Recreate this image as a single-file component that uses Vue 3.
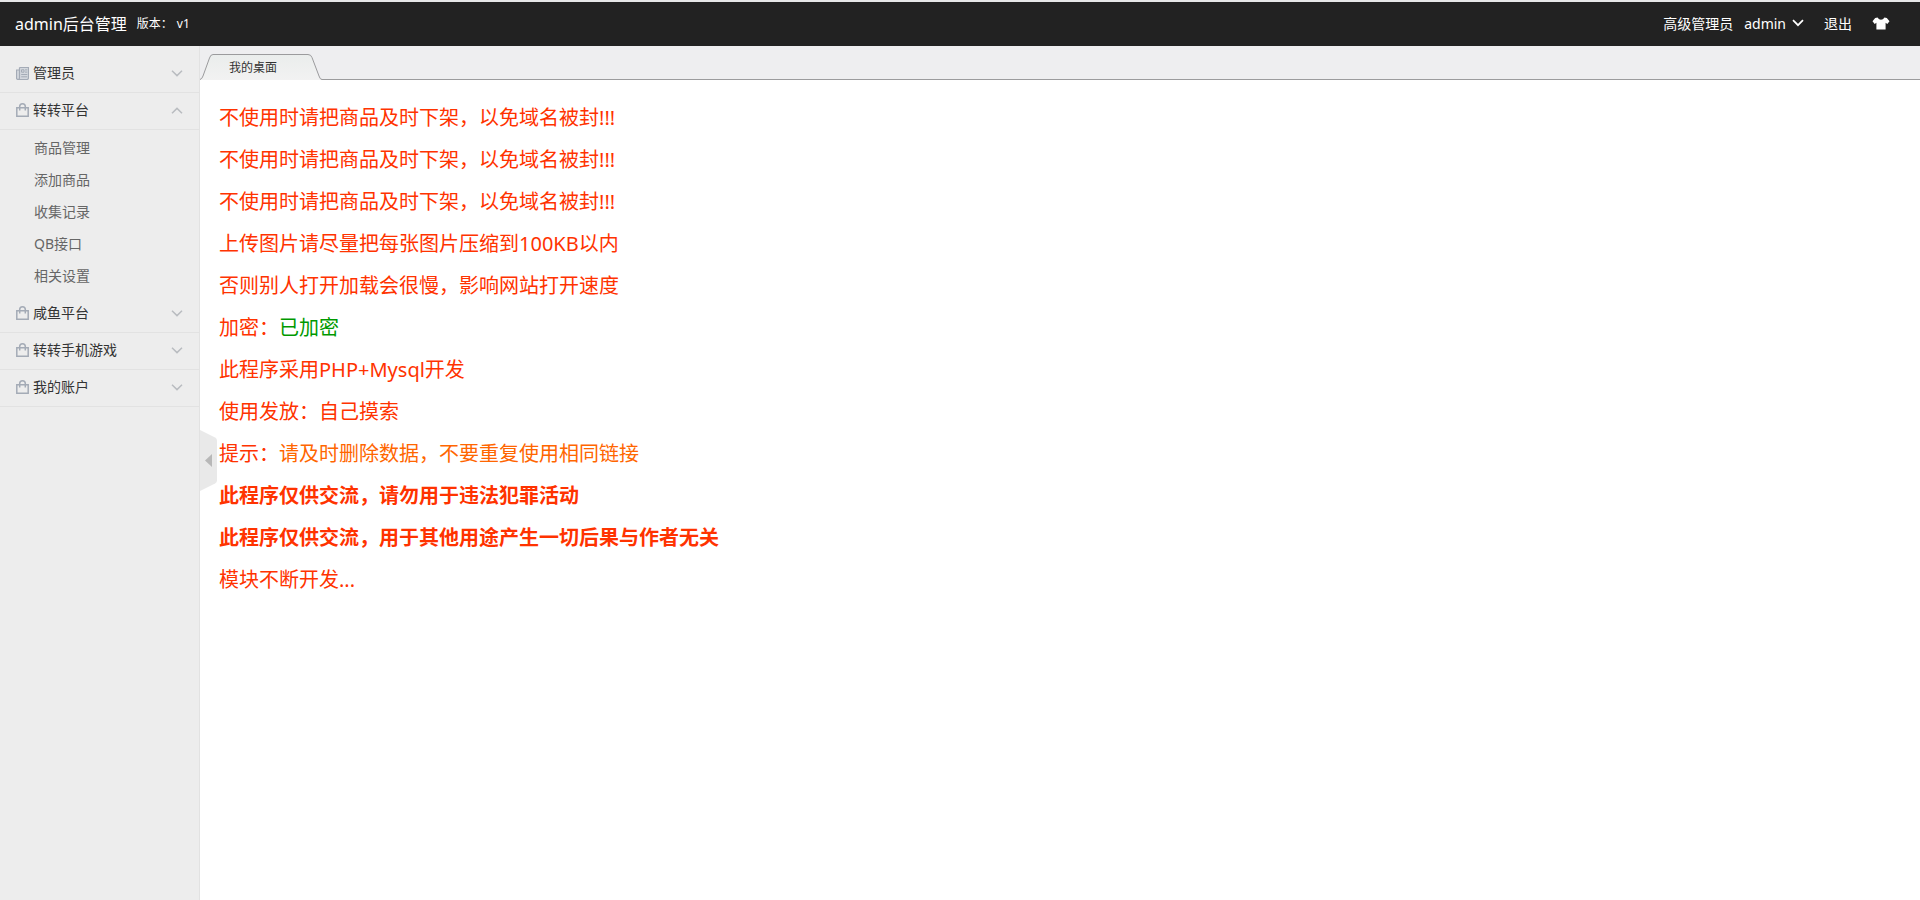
<script setup>
import { ref } from 'vue'

const menus = ref([
  { title: '管理员', icon: 'news', open: false, items: [] },
  {
    title: '转转平台',
    icon: 'bag',
    open: true,
    items: ['商品管理', '添加商品', '收集记录', 'QB接口', '相关设置'],
  },
  { title: '咸鱼平台', icon: 'bag', open: false, items: [] },
  { title: '转转手机游戏', icon: 'bag', open: false, items: [] },
  { title: '我的账户', icon: 'bag', open: false, items: [] },
])

const notices = [
  { text: '不使用时请把商品及时下架，以免域名被封!!!' },
  { text: '不使用时请把商品及时下架，以免域名被封!!!' },
  { text: '不使用时请把商品及时下架，以免域名被封!!!' },
  { text: '上传图片请尽量把每张图片压缩到100KB以内' },
  { text: '否则别人打开加载会很慢，影响网站打开速度' },
  { text: '加密：', value: '已加密', tone: 'green' },
  { text: '此程序采用PHP+Mysql开发' },
  { text: '使用发放：自己摸索' },
  { text: '提示：', value: '请及时删除数据，不要重复使用相同链接', tone: 'orange' },
  { text: '此程序仅供交流，请勿用于违法犯罪活动', strong: true },
  { text: '此程序仅供交流，用于其他用途产生一切后果与作者无关', strong: true },
  { text: '模块不断开发...' },
]

const collapsed = ref(false)
</script>

<template>
  <div class="page">
    <header class="topbar">
      <div class="brand">
        <a class="logo" href="#">admin后台管理</a>
        <span class="version">版本：</span>
        <span class="version">v1</span>
      </div>
      <nav class="user">
        <span class="role">高级管理员</span>
        <button class="account" type="button">
          admin
          <svg width="12" height="8" viewBox="0 0 12 8" aria-hidden="true">
            <path d="M1 1.2 6 6.2 11 1.2" fill="none" stroke="#fff" stroke-width="1.7" />
          </svg>
        </button>
        <a class="exit" href="#">退出</a>
        <button class="skin" type="button" aria-label="换肤">
          <svg width="18" height="13" viewBox="0 0 18 13" aria-hidden="true">
            <path
              d="M5.6.6C6.6 2.2 7.7 2.7 9 2.7S11.4 2.2 12.4.6L14.8 1 17.5 4.2 15.3 6.9 13.6 5.8V12.5H4.4V5.8L2.7 6.9.5 4.2 3.2 1Z"
              fill="#fff"
            />
          </svg>
        </button>
      </nav>
    </header>

    <div class="body">
      <aside v-show="!collapsed" class="side">
        <section v-for="menu in menus" :key="menu.title">
          <button
            class="menu-title"
            type="button"
            :aria-expanded="menu.open"
            @click="menu.open = !menu.open"
          >
            <svg v-if="menu.icon === 'news'" class="icon" width="13" height="13" viewBox="0 0 13 13" aria-hidden="true">
              <path
                d="M3.5.5h9v10.2q0 1.8-1.8 1.8H2.3Q.5 12.5.5 10.7V3h3M3.5.5v10.4q0 1.2-1 1.5"
                fill="#d4d8de"
                stroke="#a4abb6"
                stroke-width="1.2"
              />
              <path d="M5.5 2.8H8v2.4H5.5zM9 2.9h2.3M9 5.1h2.3M5.2 7.5h6.1M5.2 9.8h6.1" fill="none" stroke="#a4abb6" />
            </svg>
            <svg v-else class="icon" width="13" height="14" viewBox="0 0 13 14" aria-hidden="true">
              <path
                d="M.8 4.8h11.4v8.4H.8zM3.7 7.5V3.6Q3.7.8 6.5.8T9.3 3.6v3.9"
                fill="none"
                stroke="#a4abb6"
                stroke-width="1.5"
              />
            </svg>
            <span class="label">{{ menu.title }}</span>
            <svg
              class="arrow"
              :class="{ up: menu.open }"
              width="12"
              height="7"
              viewBox="0 0 12 7"
              aria-hidden="true"
            >
              <path d="M1 .8 6 5.6 11 .8" fill="none" stroke="#b9bcc0" stroke-width="1.5" />
            </svg>
          </button>
          <ul v-if="menu.open && menu.items.length" class="submenu">
            <li v-for="item in menu.items" :key="item"><a href="#">{{ item }}</a></li>
          </ul>
        </section>
      </aside>

      <main class="main">
        <div class="tabs">
          <a class="tab" href="#">
            <svg class="tab-shape" width="122" height="26" viewBox="0 0 122 26" aria-hidden="true">
              <defs>
                <linearGradient id="tabFill" x1="0" y1="0" x2="0" y2="1">
                  <stop offset="0" stop-color="#eaedec" />
                  <stop offset="1" stop-color="#f2f2f2" />
                </linearGradient>
              </defs>
              <path
                d="M0 26V25.5Q2 25 3 22L9.5 4Q10.5.5 13 .5H108Q111 .5 112 3.5L119 22Q120 25.5 122 25.5V26Z"
                fill="url(#tabFill)"
              />
              <path
                d="M0 25.5Q2 25 3 22L9.5 4Q10.5.5 13 .5H108Q111 .5 112 3.5L119 22Q120 25.5 122 25.5"
                fill="none"
                stroke="#9b9b9d"
              />
            </svg>
            <span class="tab-label">我的桌面</span>
          </a>
        </div>

        <article class="content">
          <p v-for="(line, i) in notices" :key="i" :class="{ strong: line.strong }">
            {{ line.text }}<span v-if="line.value" :class="line.tone">{{ line.value }}</span>
          </p>
        </article>

        <button class="toggle" type="button" aria-label="收起菜单" @click="collapsed = !collapsed">
          <svg width="17" height="61" viewBox="0 0 17 61" aria-hidden="true">
            <path d="M0 0 15 7.5Q17 8.5 17 10.5V50.5Q17 52.5 15 53.5L0 61Z" fill="#e9e9e9" />
            <path d="M12 24V37L5 30.5Z" fill="#b8b8b8" />
          </svg>
        </button>
      </main>
    </div>
  </div>
</template>

<style>
body {
  margin: 0;
}
</style>

<style scoped>
.page {
  box-sizing: border-box;
  display: flex;
  flex-direction: column;
  min-height: 100vh;
  border-top: 2px solid #e6e7e8;
  background: #fff;
  color: #333;
  font-family: "Noto Sans", "Noto Sans CJK SC", sans-serif;
  font-size: 14px;
}

a {
  color: inherit;
  text-decoration: none;
}

button {
  margin: 0;
  padding: 0;
  border: 0;
  background: none;
  color: inherit;
  font: inherit;
  cursor: pointer;
}

.topbar {
  box-sizing: border-box;
  display: flex;
  justify-content: space-between;
  align-items: center;
  height: 44px;
  padding: 0 30px 2px 15px;
  background: #222;
  color: #fff;
}

.brand,
.user {
  display: flex;
  align-items: center;
}

.logo {
  margin-right: 10px;
  font-size: 16px;
}

.version {
  margin-right: 4px;
  font-size: 12px;
}

.account {
  display: flex;
  align-items: center;
  gap: 6px;
  margin-left: 11px;
}

.exit {
  margin-left: 20px;
}

.skin {
  display: flex;
  margin-left: 20px;
}

.body {
  display: flex;
  flex: 1;
}

.side {
  box-sizing: border-box;
  flex: 0 0 200px;
  padding-top: 10px;
  border-right: 1px solid #e2e2e2;
  background: #ededed;
}

.menu-title {
  display: flex;
  align-items: center;
  width: 100%;
  height: 37px;
  padding: 0 16px 2px 16px;
  border-bottom: 1px solid #e2e2e2;
  line-height: 20px;
  text-align: left;
}

.label {
  flex: 1;
  margin-left: 4px;
}

.arrow.up {
  transform: rotate(180deg);
}

.submenu {
  margin: 0;
  padding: 2px 0 4px 34px;
  list-style: none;
  color: #666;
  line-height: 32px;
}

.submenu a {
  display: block;
}

.main {
  position: relative;
  flex: 1;
  min-width: 0;
}

.tabs {
  box-sizing: border-box;
  display: flex;
  height: 34px;
  padding-top: 8px;
  background: linear-gradient(#9b9b9d, #9b9b9d) bottom / 100% 1px no-repeat #eeeef0;
}

.tab {
  display: grid;
  font-size: 12px;
  line-height: 26px;
}

.tab-shape,
.tab-label {
  grid-area: 1 / 1;
}

.tab-label {
  padding-top: 1px;
  padding-left: 29px;
  line-height: 25px;
}

.content {
  padding: 17px 19px;
  color: #f30;
  font-size: 20px;
  line-height: 42px;
}

.content p {
  margin: 0;
}

.content .strong {
  font-weight: 700;
}

.green {
  color: #090;
}

.orange {
  color: #f60;
}

.toggle {
  position: absolute;
  top: calc(50% - 43px);
  left: 0;
  display: flex;
}
</style>
